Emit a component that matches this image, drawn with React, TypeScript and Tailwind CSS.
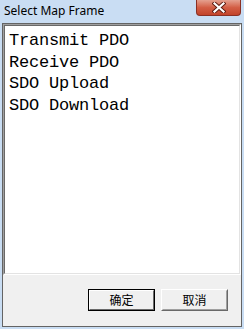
import React from "react";

export default function App() {
  const items = ["Transmit PDO", "Receive PDO", "SDO Upload", "SDO Download"];
  return (
    <div className="relative w-[244px] h-[329px] bg-[#c9ddf3] flex flex-col overflow-hidden">
      <div className="h-[23px] shrink-0 pl-[4px] pt-[3px] text-[12px] leading-[15px] text-black" style={{ fontFamily: '"Noto Sans", "Open Sans", sans-serif' }}>
        Select Map Frame
      </div>
      <div className="absolute top-0 right-[3px] w-[45px] h-[16px] rounded-b-[4px] border border-t-0 border-[#8a3024] bg-gradient-to-b from-[#e4a08f] via-[#d35e45] to-[#c2432a] flex items-center justify-center">
        <svg width="14" height="11" viewBox="0 0 14 11">
          <path d="M2.5 1.5 L11.5 9.5 M11.5 1.5 L2.5 9.5" stroke="#5a1a10" strokeWidth="4" strokeLinecap="square" />
          <path d="M2.5 1.5 L11.5 9.5 M11.5 1.5 L2.5 9.5" stroke="#ffffff" strokeWidth="2.2" strokeLinecap="square" />
        </svg>
      </div>
      <div className="flex-1 mx-[2px] mb-[2px] border border-[#646464] bg-[#f0f0f0] flex flex-col">
        <div className="h-[251px] border border-t-[#a0a0a0] border-l-[#a0a0a0] border-r-white border-b-white">
          <div className="h-full border border-t-[#696969] border-l-[#696969] border-r-[#e3e3e3] border-b-[#e3e3e3] bg-white pl-[4px] pt-[4px]">
            {items.map((t) => (
              <div key={t} className="text-[17px] leading-[21.7px] text-black tracking-[-0.2px] whitespace-pre" style={{ fontFamily: '"Liberation Mono", monospace' }}>
                {t}
              </div>
            ))}
          </div>
        </div>
        <div className="flex-1 flex justify-end items-start gap-[6px] pr-[13px] pt-[14px]">
          <div className="w-[67px] h-[22px] border border-black">
            <div className="h-full border border-t-white border-l-white border-r-[#696969] border-b-[#696969] bg-[#f0f0f0] flex items-center justify-center text-[12px] text-black" style={{ fontFamily: '"Noto Sans CJK SC", sans-serif' }}>
              确定
            </div>
          </div>
          <div className="w-[67px] h-[22px] border border-t-white border-l-white border-r-[#696969] border-b-[#696969]">
            <div className="h-full border border-t-[#f0f0f0] border-l-[#f0f0f0] border-r-[#a0a0a0] border-b-[#a0a0a0] bg-[#f0f0f0] flex items-center justify-center text-[12px] text-black" style={{ fontFamily: '"Noto Sans CJK SC", sans-serif' }}>
              取消
            </div>
          </div>
        </div>
      </div>
    </div>
  );
}
